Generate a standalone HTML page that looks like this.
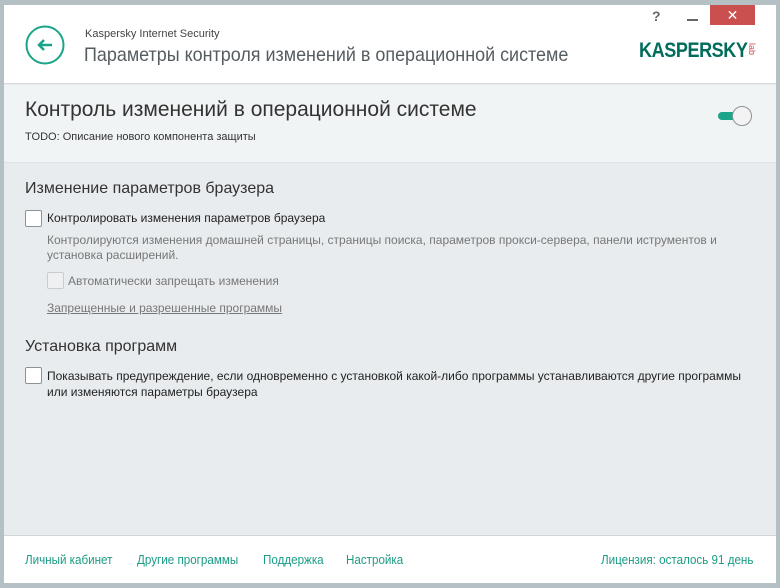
<!DOCTYPE html>
<html><head><meta charset="utf-8"><style>
*{margin:0;padding:0;box-sizing:border-box}
body{width:780px;height:588px;background:#b5c0c5;font-family:"Liberation Sans","DejaVu Sans",sans-serif;position:relative;overflow:hidden}
.win{position:absolute;left:4px;top:5px;width:772px;height:578px;background:#e8ecee;overflow:hidden}
.hdr{position:absolute;left:0;top:0;width:772px;height:79px;background:#fff;border-bottom:1px solid #d4dadd}
.sec{position:absolute;left:0;top:80px;width:772px;height:78px;background:#f1f4f5;border-bottom:1px solid #dde2e4}
.ftr{position:absolute;left:0;top:530px;width:772px;height:48px;background:#fff;border-top:1px solid #cfd6d9}
.t{position:absolute;white-space:nowrap}
.cb{position:absolute;width:17px;height:17px;border:1px solid #8a9398;background:#fff;border-radius:2px}
.f{color:#1a9c85;font-size:12.5px;top:17px;transform:scaleX(.93);transform-origin:left}
</style></head><body>
<div class="win">
 <div class="hdr">
  <svg style="position:absolute;left:21px;top:20px" width="40" height="40"><circle cx="20" cy="20" r="18.5" fill="none" stroke="#1aa58a" stroke-width="2"/><path d="M27 20H14M19 15l-5 5 5 5" fill="none" stroke="#1aa58a" stroke-width="2.5"/></svg>
  <div class="t" style="left:81px;top:23px;font-size:11px;color:#444">Kaspersky Internet Security</div>
  <div class="t" style="left:80px;top:39px;font-size:19.5px;color:#555c60;transform:scaleX(.92);transform-origin:left">Параметры контроля изменений в операционной системе</div>
  <div class="t" style="left:648px;top:3px;font-size:14px;color:#666;font-weight:bold">?</div>
  <div style="position:absolute;left:683px;top:14px;width:11px;height:2px;background:#666"></div>
  <div style="position:absolute;left:706px;top:0;width:45px;height:20px;background:#c9504f;color:#fff;font-size:14px;text-align:center;line-height:20px;font-weight:bold">✕</div>
  <div class="t" style="left:635px;top:34px;font-size:21px;color:#006d5b;font-weight:bold;letter-spacing:-0.5px;transform:scaleX(.86);transform-origin:left">KASPERSKY</div>
  <div class="t" style="left:753px;top:38px;font-size:9px;color:#c9504f;transform:rotate(90deg);transform-origin:left top">lab</div>
 </div>
 <div class="sec">
  <div class="t" style="left:21px;top:13px;font-size:21px;color:#333">Контроль изменений в операционной системе</div>
  <div class="t" style="left:21px;top:46px;font-size:11px;color:#333">TODO: Описание нового компонента защиты</div>
  <div style="position:absolute;left:714px;top:27px;width:28px;height:8px;border-radius:4px;background:#1aa58a"></div>
  <div style="position:absolute;left:728px;top:21px;width:20px;height:20px;border-radius:50%;background:#f3f3f3;border:1.5px solid #8c9497"></div>
 </div>
 <div class="t" style="left:21px;top:175px;font-size:16px;color:#333">Изменение параметров браузера</div>
 <div class="cb" style="left:21px;top:205px"></div>
 <div class="t" style="left:43px;top:206px;font-size:12px;color:#222">Контролировать изменения параметров браузера</div>
 <div class="t" style="left:43px;top:228px;font-size:12px;color:#777;line-height:15px">Контролируются изменения домашней страницы, страницы поиска, параметров прокси-сервера, панели иструментов и<br>установка расширений.</div>
 <div class="cb" style="left:43px;top:267px;border-color:#c8cdd0;background:#eef0f1"></div>
 <div class="t" style="left:64px;top:269px;font-size:12px;color:#777">Автоматически запрещать изменения</div>
 <div class="t" style="left:43px;top:296px;font-size:12px;color:#777;text-decoration:underline">Запрещенные и разрешенные программы</div>
 <div class="t" style="left:21px;top:333px;font-size:16px;color:#333">Установка программ</div>
 <div class="cb" style="left:21px;top:362px"></div>
 <div class="t" style="left:43px;top:363px;font-size:12px;color:#222;line-height:16px">Показывать предупреждение, если одновременно с установкой какой-либо программы устанавливаются другие программы<br>или изменяются параметры браузера</div>
 <div class="ftr">
  <div class="t f" style="left:21px">Личный кабинет</div>
  <div class="t f" style="left:133px">Другие программы</div>
  <div class="t f" style="left:259px">Поддержка</div>
  <div class="t f" style="left:342px">Настройка</div>
  <div class="t f" style="left:597px">Лицензия: осталось 91 день</div>
 </div>
</div>
</body></html>
